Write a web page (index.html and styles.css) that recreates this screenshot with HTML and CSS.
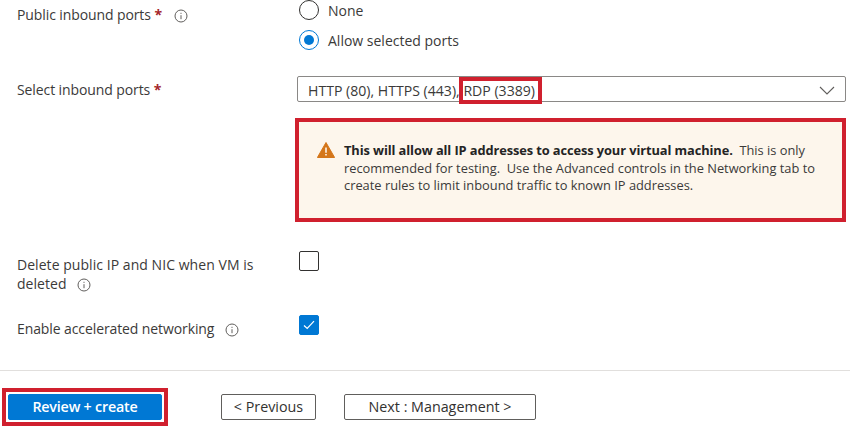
FILE: index.html
```html
<!DOCTYPE html>
<html lang="en">
<head>
    <meta charset="UTF-8">
    <meta name="viewport" content="width=device-width, initial-scale=1.0">
    <title>Create a virtual machine</title>
    <link rel="stylesheet" href="styles.css">
</head>
<body>

    <div class="form">
        <div class="row row-ports">
            <div class="label">Public inbound ports <span class="req">*</span>
                <svg class="info info-wide" viewBox="0 0 14 14"><circle cx="7" cy="7" r="6"/><path d="M7 6.2v4M7 3.8v1.1"/></svg>
            </div>
            <div class="radios">
                <div class="radio-row"><span class="radio"></span>None</div>
                <div class="radio-row"><span class="radio radio-on"></span>Allow selected ports</div>
            </div>
        </div>

        <div class="row row-select">
            <div class="label">Select inbound ports <span class="req">*</span></div>
            <div class="select">
                <span>HTTP (80), HTTPS (443), <span class="mark">RDP (3389)</span></span>
                <svg class="chevron" viewBox="0 0 16 9"><path d="M1 1l7 7 7-7"/></svg>
            </div>
        </div>

        <div class="row row-warning">
            <div></div>
            <div class="warning">
                <svg class="warn-icon" viewBox="0 0 18 16"><path class="warn-bg" d="M9 .5L17.6 15.5H.4z"/><path class="warn-mark" d="M9 5.5v5.2M9 11.9v1.5"/></svg>
                <p><b>This will allow all IP addresses to access your virtual machine.</b>&nbsp; This is only recommended for testing.&nbsp; Use the Advanced controls in the Networking tab to create rules to limit inbound traffic to known IP addresses.</p>
            </div>
        </div>

        <div class="row row-delete">
            <div class="label">Delete public IP and NIC when VM is deleted
                <svg class="info" viewBox="0 0 14 14"><circle cx="7" cy="7" r="6"/><path d="M7 6.2v4M7 3.8v1.1"/></svg>
            </div>
            <div><span class="check"></span></div>
        </div>

        <div class="row row-accel">
            <div class="label">Enable accelerated networking
                <svg class="info" viewBox="0 0 14 14"><circle cx="7" cy="7" r="6"/><path d="M7 6.2v4M7 3.8v1.1"/></svg>
            </div>
            <div>
                <span class="check check-on">
                    <svg viewBox="0 0 12 10"><path d="M1 5.5l3.2 3L11 1.2"/></svg>
                </span>
            </div>
        </div>
    </div>

    <div class="footer">
        <div class="review-mark"><button class="btn btn-primary">Review + create</button></div>
        <button class="btn btn-prev">&lt; Previous</button>
        <button class="btn btn-next">Next : Management &gt;</button>
    </div>

</body>
</html>
```

FILE: styles.css
```css
body {
    font-family: "Open Sans", "Noto Sans", Arial, sans-serif;
    font-size: 14px;
    color: #3b3a39;
    background: #fff;
    margin: 0;
    padding: 0;
    height: 430px;
    overflow: hidden;
}

.form {
    padding: 0 4px 0 17px;
    height: 370px;
    border-bottom: 1px solid #e1dfdd;
    box-sizing: content-box;
}

.row {
    display: grid;
    grid-template-columns: 280px 1fr;
}

.label {
    line-height: 20px;
    letter-spacing: -0.1px;
}

.req {
    color: #a4262c;
    font-weight: 700;
}

.info {
    width: 14px;
    height: 14px;
    margin-left: 7px;
    vertical-align: -3px;
    fill: none;
    stroke: #605e5c;
    stroke-width: 1;
}

.info-wide {
    margin-left: 9px;
}

/* Radios */
.row-ports .label {
    padding-top: 5px;
}

.radio-row {
    display: flex;
    align-items: center;
    gap: 9px;
    height: 20px;
    padding-left: 2px;
    margin-bottom: 10px;
}

.radio {
    width: 20px;
    height: 20px;
    box-sizing: border-box;
    border: 1px solid #323130;
    border-radius: 50%;
    background: #fff;
    display: flex;
    align-items: center;
    justify-content: center;
}

.radio-on {
    border-color: #0078d4;
}

.radio-on::after {
    content: "";
    width: 10px;
    height: 10px;
    border-radius: 50%;
    background: #0078d4;
}

/* Select */
.row-select {
    margin-top: 16px;
}

.row-select .label {
    padding-top: 4px;
}

.select {
    height: 26px;
    box-sizing: border-box;
    border: 1px solid #8a8886;
    border-radius: 2px;
    display: flex;
    align-items: center;
    justify-content: space-between;
    padding: 2px 10px 0 10px;
    font-size: 14.1px;
}

.mark {
    outline: 4px solid #d0202e;
    padding-right: 3px;
}

.chevron {
    width: 16px;
    height: 9px;
    fill: none;
    stroke: #605e5c;
    stroke-width: 1.1;
}

/* Warning */
.row-warning {
    margin-top: 16px;
}

.warning {
    margin-left: -2px;
    height: 104px;
    box-sizing: border-box;
    border: 4px solid #d0202e;
    background: #fdf6ec;
    display: flex;
    align-items: flex-start;
    padding: 20px 16px 0 18px;
    gap: 9px;
    font-size: 12.85px;
    line-height: 17.5px;
}

.warning p {
    margin: 0;
}

.warning b {
    color: #242424;
    letter-spacing: -0.1px;
}

.warn-icon {
    width: 18px;
    height: 16px;
    flex-shrink: 0;
}

.warn-bg {
    fill: #d4761a;
    stroke: #d4761a;
    stroke-linejoin: round;
}

.warn-mark {
    stroke: #fdf6ec;
    stroke-width: 1.6;
    fill: none;
}

/* Checkboxes */
.row-delete {
    margin-top: 29px;
}

.row-delete .label {
    padding-top: 4px;
    width: 250px;
    letter-spacing: 0.05px;
    line-height: 19px;
}

.row-accel {
    margin-top: 22px;
}

.row-accel .label {
    padding-top: 4px;
}

.check {
    display: flex;
    align-items: center;
    justify-content: center;
    width: 20px;
    height: 20px;
    margin-left: 2px;
    box-sizing: border-box;
    border: 1px solid #323130;
    border-radius: 2px;
    background: #fff;
}

.check-on {
    border-color: #0078d4;
    background: #0078d4;
}

.check svg {
    width: 12px;
    height: 10px;
    fill: none;
    stroke: #fff;
    stroke-width: 1.2;
}

/* Footer */
.footer {
    display: flex;
    align-items: center;
    padding: 17px 0 0 2px;
}

.review-mark {
    border: 4px solid #d0202e;
    padding: 2px;
    margin-right: 53px;
}

.btn {
    height: 26px;
    box-sizing: border-box;
    font-family: inherit;
    font-size: 14.3px;
    border: 1px solid #605e5c;
    border-radius: 2px;
    background: #fff;
    color: #323130;
    padding: 0 0 2px;
}

.btn-primary {
    display: block;
    width: 154px;
    background: #0078d4;
    border-color: #0078d4;
    color: #fff;
    font-weight: 600;
    letter-spacing: -0.2px;
}

.btn-prev {
    width: 95px;
    margin-right: 28px;
}

.btn-next {
    width: 192px;
}
```
